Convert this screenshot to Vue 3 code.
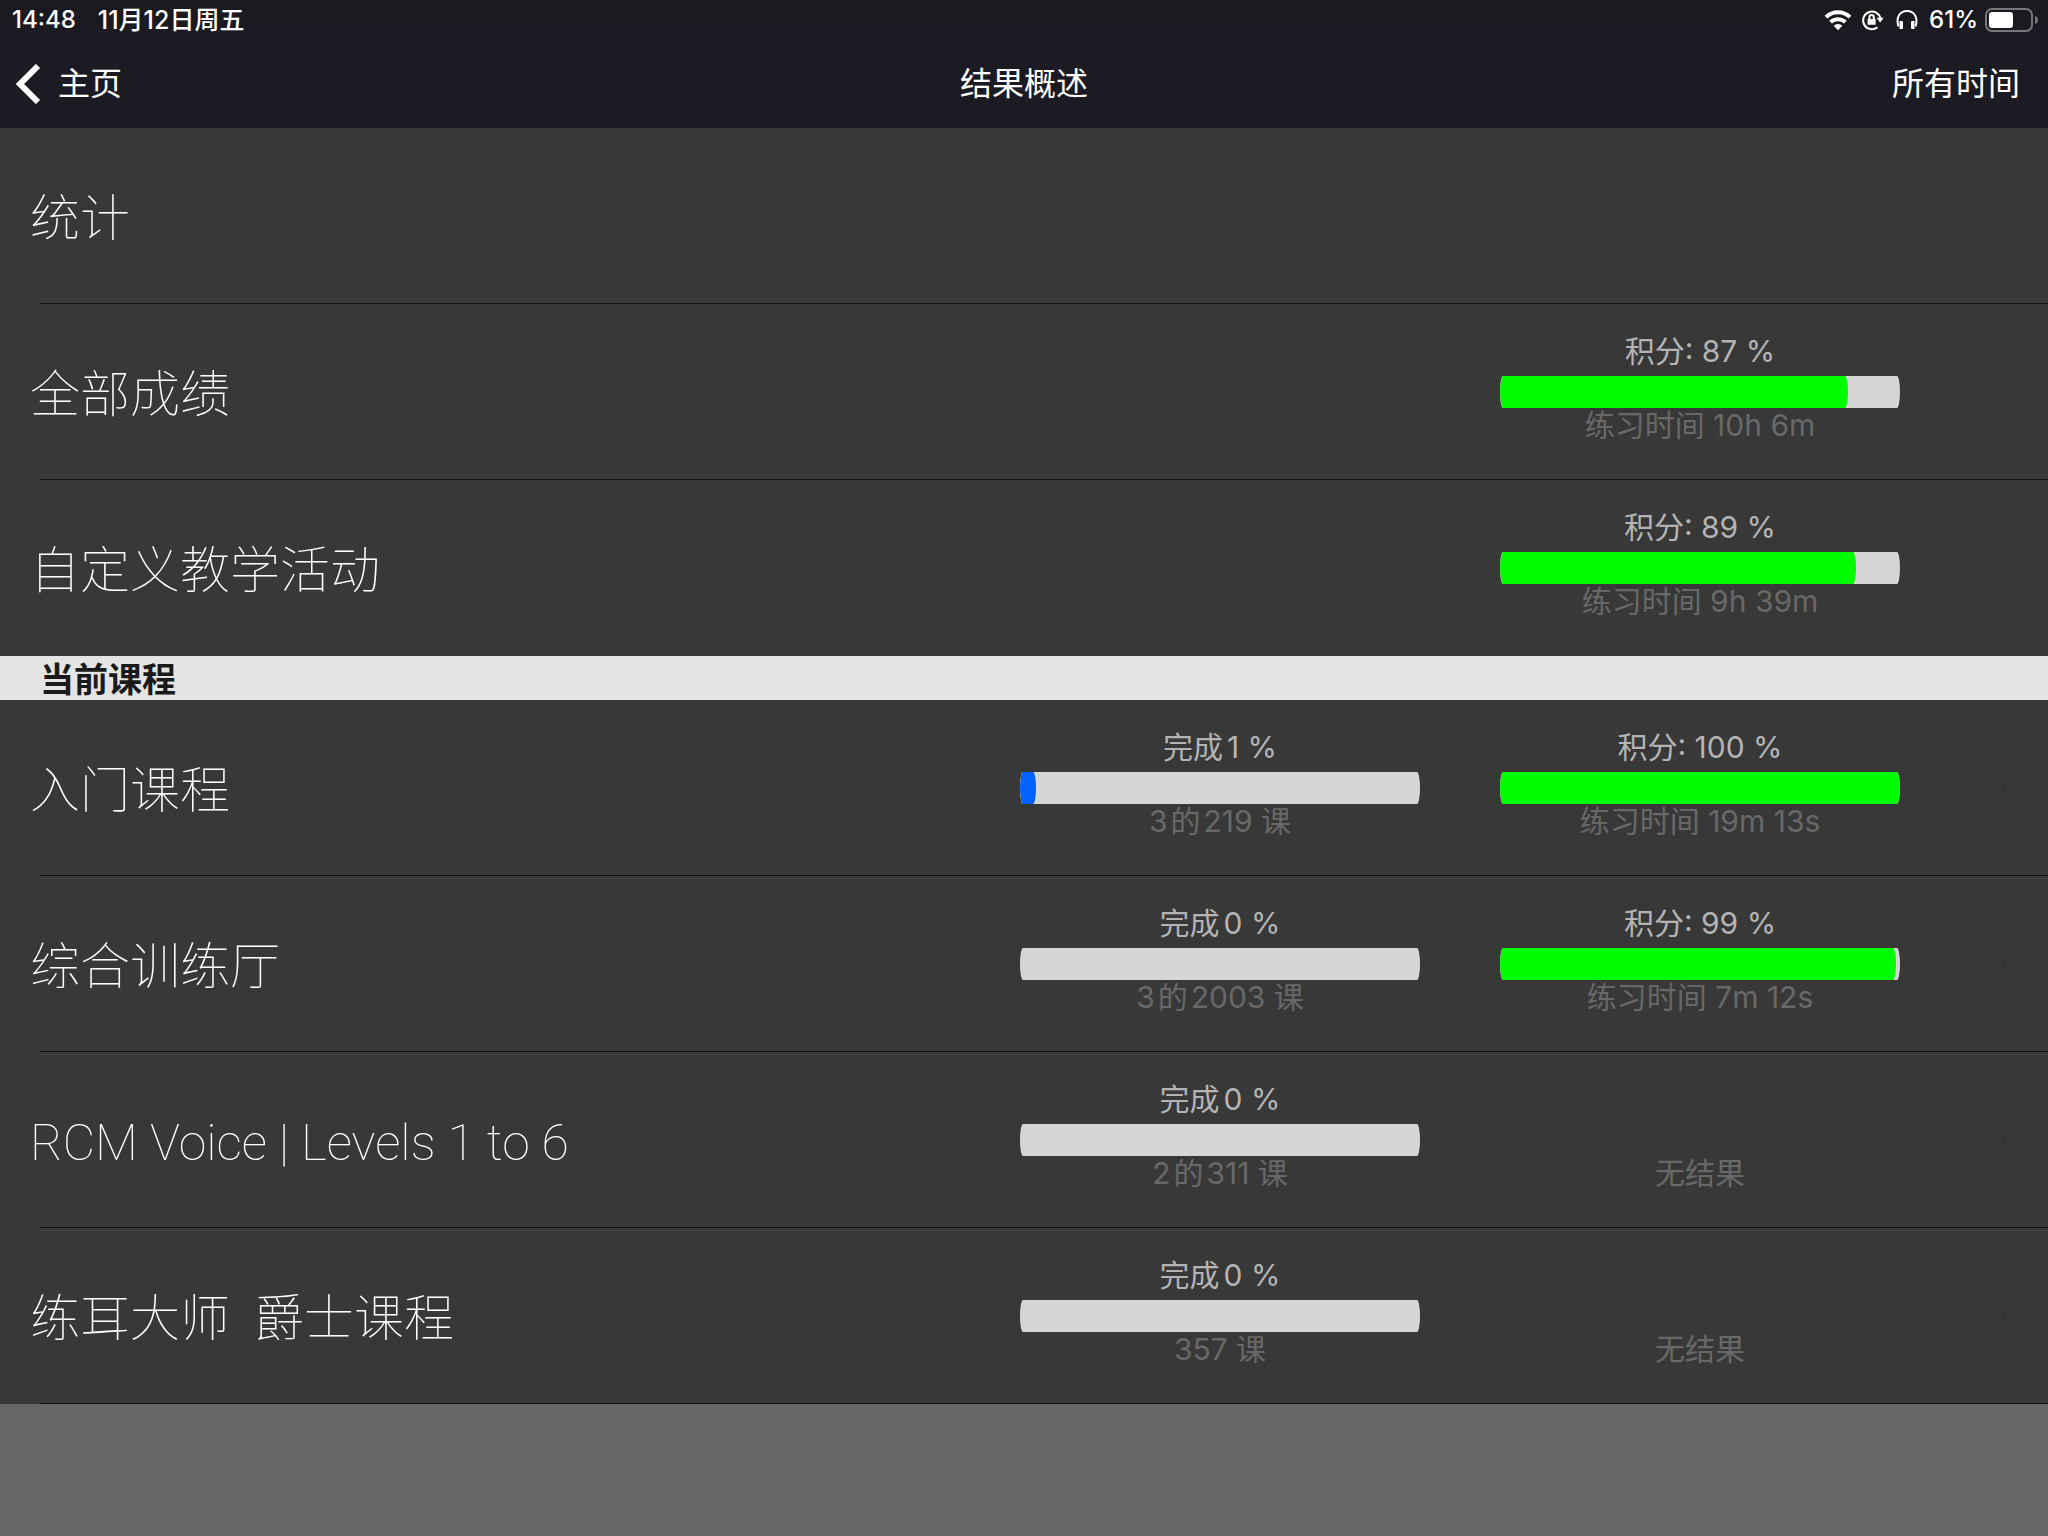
<script setup>
const overview = [
  { title: '统计' },
  { title: '全部成绩', score: 87, time: '练习时间 10h 6m' },
  { title: '自定义教学活动', score: 89, time: '练习时间 9h 39m' },
]

const courses = [
  { title: '入门课程', done: 1, lessons: ['3', '的', '219 课'], score: 100, time: '练习时间 19m 13s' },
  { title: '综合训练厅', done: 0, lessons: ['3', '的', '2003 课'], score: 99, time: '练习时间 7m 12s' },
  { title: 'RCM Voice | Levels 1 to 6', done: 0, lessons: ['2', '的', '311 课'], time: '无结果' },
  { title: '练耳大师\u00a0\u00a0爵士课程', done: 0, lessons: ['357 课'], time: '无结果' },
]

const groups = [
  { heading: '', rows: overview },
  { heading: '当前课程', rows: courses },
]

// A started course always shows a visible sliver of progress.
const fillWidth = (percent) => (percent > 0 ? `max(16px, ${percent}%)` : '0')
</script>

<template>
  <div class="screen">
    <header class="top">
      <div class="status">
        <span>14:48</span>
        <span class="date">11月12日周五</span>
        <div class="indicators">
          <svg class="wifi" viewBox="0 0 28 22" aria-hidden="true">
            <path d="M2 8.2a17 17 0 0 1 24 0" />
            <path d="M6.600 13.200a10.500 10.500 0 0 1 14.800 0" />
            <path class="solid" d="M14 21.200l-4.300-4.400a6 6 0 0 1 8.600 0z" />
          </svg>
          <svg class="lock" viewBox="0 0 24 22" aria-hidden="true">
            <path d="M16.500 18.200a8.800 8.800 0 1 1 3-8.600" />
            <path class="solid" d="M15.500 8.800h7.200l-3.600 4.800zM6.600 10h8v5.800h-8z" />
            <path d="M8.400 10V8.200a2.200 2.200 0 0 1 4.400 0V10" class="shackle" />
          </svg>
          <svg class="phones" viewBox="0 0 22 22" aria-hidden="true">
            <path d="M2.500 17.500C-.5 8 4 2 11 2s11.500 6 8.500 15.500" />
            <path class="solid" d="M3.500 12h2.200c.8 0 1.300.5 1.300 1.300v5.400c0 .8-.5 1.300-1.300 1.300H3.500zM18.500 12h-2.200c-.8 0-1.300.5-1.300 1.300v5.400c0 .8.5 1.300 1.300 1.300h2.200z" />
          </svg>
          <span class="charge">61%</span>
          <svg class="battery" viewBox="0 0 54 24" aria-hidden="true">
            <rect x="1" y="1" width="46" height="22" rx="6" />
            <rect class="level" x="4" y="4" width="24" height="16" rx="3" />
            <path class="cap" d="M50 8c4 1 4 7 0 8z" />
          </svg>
        </div>
      </div>
      <nav class="bar">
        <button type="button" class="back">
          <svg viewBox="0 0 26 40" aria-hidden="true"><path d="M22 2L4 20l18 18" /></svg>
          主页
        </button>
        <h1>结果概述</h1>
        <button type="button" class="range">所有时间</button>
      </nav>
    </header>

    <main>
      <section v-for="group in groups" :key="group.heading">
        <h2 v-if="group.heading">{{ group.heading }}</h2>
        <ul>
          <li v-for="row in group.rows" :key="row.title">
            <a href="#" class="row">
              <span class="title">{{ row.title }}</span>
              <span class="meters">
                <span v-if="row.lessons" class="meter">
                  <span class="label">完成<span class="num">{{ row.done }} %</span></span>
                  <span class="track"><span class="fill blue" :style="{ width: fillWidth(row.done) }"></span></span>
                  <span class="note"><span v-for="part in row.lessons" :key="part" class="part">{{ part }}</span></span>
                </span>
                <span v-if="row.time" class="meter">
                  <template v-if="row.score">
                    <span class="label">积分: {{ row.score }} %</span>
                    <span class="track"><span class="fill green" :style="{ width: fillWidth(row.score) }"></span></span>
                  </template>
                  <span class="note">{{ row.time }}</span>
                </span>
              </span>
              <svg class="chevron" viewBox="0 0 16 24" aria-hidden="true"><path d="M4 3l9 9-9 9" /></svg>
            </a>
          </li>
        </ul>
      </section>
    </main>
  </div>
</template>

<style>
body {
  margin: 0;
  background: #666666;
}
</style>

<style scoped>
.screen {
  font-family: Inter, "Noto Sans CJK SC", sans-serif;
  color: #ffffff;
}

.top {
  background: linear-gradient(#19191f 0, #1c1b24 48px);
}

.status {
  display: flex;
  align-items: center;
  height: 40px;
  padding: 0 12px;
  font-size: 24px;
  font-weight: 500;
  line-height: 40px;
}

.date {
  margin-left: 22px;
  font-size: 25px;
}

.indicators {
  display: flex;
  align-items: center;
  margin-left: auto;
}

.indicators svg {
  fill: none;
  stroke: #ffffff;
  stroke-width: 2;
}

.indicators .solid {
  fill: #ffffff;
  stroke: none;
}

.wifi {
  width: 28px;
  height: 22px;
  margin-right: 9px;
}

.indicators .wifi {
  stroke-width: 4;
}

.lock {
  width: 24px;
  height: 22px;
  margin-right: 11px;
}

.phones {
  width: 22px;
  height: 22px;
  margin-right: 11px;
}

.charge {
  margin-right: 7px;
}

.battery {
  width: 54px;
  height: 24px;
  margin-right: -3px;
}

.indicators .battery {
  stroke: #77777b;
}

.battery .level {
  fill: #ffffff;
  stroke: none;
}

.battery .cap {
  fill: #77777b;
  stroke: none;
}

.bar {
  display: grid;
  grid-template-columns: 1fr auto 1fr;
  align-items: center;
  height: 88px;
  padding: 0 16px;
}

.bar button {
  display: flex;
  align-items: center;
  padding: 0;
  border: 0;
  background: none;
  color: inherit;
  font: inherit;
  font-size: 32px;
  line-height: 48px;
}

.bar .back {
  justify-self: start;
  gap: 16px;
}

.back svg {
  width: 26px;
  height: 40px;
  fill: none;
  stroke: #ffffff;
  stroke-width: 6;
}

.bar .range {
  justify-self: end;
  padding-right: 12px;
}

h1 {
  margin: 0;
  font-size: 32px;
  font-weight: 400;
  line-height: 48px;
}

ul {
  margin: 0;
  padding: 0;
  list-style: none;
}

h2 {
  margin: 0;
  padding: 4px 40px 0;
  background: #e4e4e4;
  color: #1a1a1a;
  font-size: 34px;
  font-weight: 700;
  line-height: 40px;
}

li {
  background: linear-gradient(#141414, #141414) 40px 100% / 100% 1px no-repeat #383838;
}

section:first-child li:last-child {
  background: #383838;
}

.row {
  display: flex;
  align-items: center;
  height: 176px;
  padding: 0 40px 0 30px;
  color: #ffffff;
  text-decoration: none;
}

.title {
  flex: 1;
  padding-top: 6px;
  font-family: Roboto, "Noto Sans CJK SC", sans-serif;
  font-size: 50px;
  font-weight: 100;
  line-height: 72px;
}

.meters {
  display: flex;
  gap: 80px;
  margin-right: 92px;
}

.meter {
  display: flex;
  flex-direction: column;
  justify-content: flex-end;
  width: 400px;
  height: 100px;
  text-align: center;
}

.label,
.note {
  font-size: 30px;
  font-weight: 400;
  line-height: 34px;
}

.label {
  padding-bottom: 8px;
  color: #b4b4b4;
}

.num {
  margin-left: 4px;
}

.note {
  color: #686868;
}

.part + .part {
  margin-left: 3px;
}

.track {
  flex: none;
  height: 32px;
  border-radius: 3px / 16px;
  background: #d6d6d6;
  overflow: hidden;
}

.fill {
  display: block;
  height: 100%;
  border-radius: 3px / 16px;
}

.blue {
  background: #0062ff;
}

.green {
  background: #00fc00;
}

.chevron {
  width: 16px;
  height: 24px;
  fill: none;
  stroke: #343434;
  stroke-width: 3;
}
</style>
